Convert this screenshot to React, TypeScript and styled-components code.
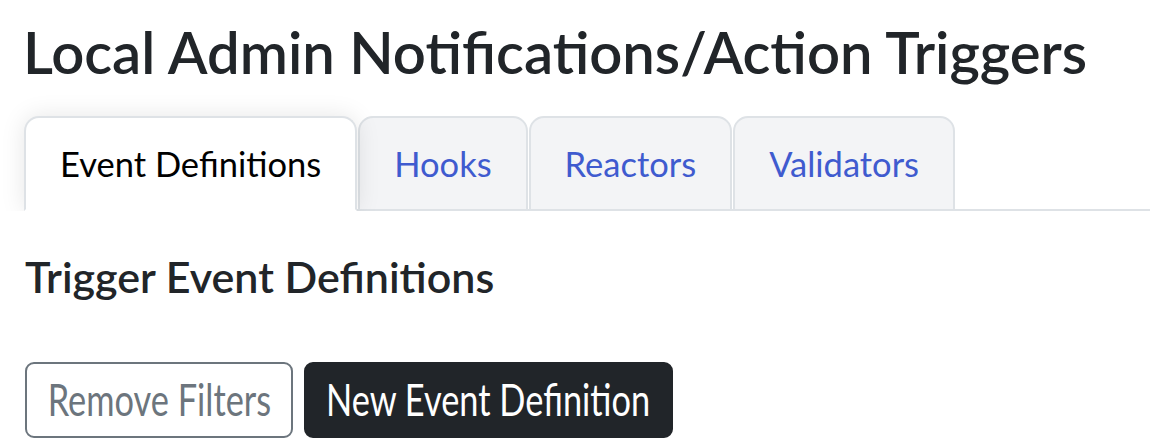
import React from "react";
import styled, { createGlobalStyle, css } from "styled-components";

const GlobalStyle = createGlobalStyle`
  html, body {
    margin: 0;
    padding: 0;
    background: #ffffff;
  }
  body {
    font-family: Lato, "Open Sans", sans-serif;
    color: #212529;
  }
`;

const Page = styled.div`
  padding: 17px 0 0 24px;
  display: flex;
  flex-direction: column;
  align-items: stretch;
`;

const Title = styled.h1`
  margin: 0 0 30px -1px;
  font-size: 58px;
  font-weight: 600;
  line-height: 1.19;
  color: #212529;
  white-space: nowrap;
`;

const TabNav = styled.nav`
  display: flex;
  gap: 0;
  border-bottom: 2px solid #dee2e6;
  margin-bottom: 40px;
`;

const Tab = styled.a<{ $active?: boolean }>`
  box-sizing: border-box;
  height: 95px;
  margin: 0 1px -2px 0;
  padding: 0 34px;
  display: flex;
  align-items: center;
  border: 2px solid #dee2e6;
  border-radius: 15px 15px 0 0;
  font-size: 34.5px;
  line-height: 1.5;
  white-space: nowrap;
  text-decoration: none;
  cursor: pointer;
  ${({ $active }) =>
    $active
      ? css`
          position: relative;
          z-index: 1;
          background: #ffffff;
          color: #000000;
          border-bottom-color: #ffffff;
          box-shadow: 0 0 24px rgba(0, 0, 0, 0.1);
          clip-path: inset(-40px -40px 0 -40px);
        `
      : css`
          background: #f3f4f6;
          color: #3f5bcf;
        `}
`;

const SectionTitle = styled.h4`
  margin: 0 0 60px 1px;
  font-size: 43px;
  font-weight: 600;
  line-height: 1.19;
  color: #212529;
  white-space: nowrap;
`;

const Toolbar = styled.div`
  display: flex;
  gap: 11px;
  margin-left: 1px;
`;

const Button = styled.button<{ $variant: "outline" | "dark"; $width: number }>`
  box-sizing: border-box;
  width: ${({ $width }) => $width}px;
  height: 75.5px;
  padding: 0;
  display: inline-flex;
  align-items: center;
  justify-content: center;
  border-radius: 9px;
  font-family: Lato, "Open Sans", sans-serif;
  font-size: 43.5px;
  line-height: 1.5;
  cursor: pointer;
  ${({ $variant }) =>
    $variant === "outline"
      ? css`
          background: #ffffff;
          color: #6c757d;
          border: 2px solid #6c757d;
        `
      : css`
          background: #212529;
          color: #ffffff;
          border: 2px solid #212529;
        `}
`;

const Label = styled.span`
  display: inline-block;
  white-space: nowrap;
  transform: scaleX(0.79);
  transform-origin: center;
`;

export default function App() {
  const tabs = ["Event Definitions", "Hooks", "Reactors", "Validators"];
  return (
    <>
      <GlobalStyle />
      <Page>
        <Title>Local Admin Notifications/Action Triggers</Title>
        <TabNav>
          {tabs.map((t, i) => (
            <Tab key={t} $active={i === 0}>
              {t}
            </Tab>
          ))}
        </TabNav>
        <SectionTitle>Trigger Event Definitions</SectionTitle>
        <Toolbar>
          <Button $variant="outline" $width={268}>
            <Label>Remove Filters</Label>
          </Button>
          <Button $variant="dark" $width={369}>
            <Label>New Event Definition</Label>
          </Button>
        </Toolbar>
      </Page>
    </>
  );
}
